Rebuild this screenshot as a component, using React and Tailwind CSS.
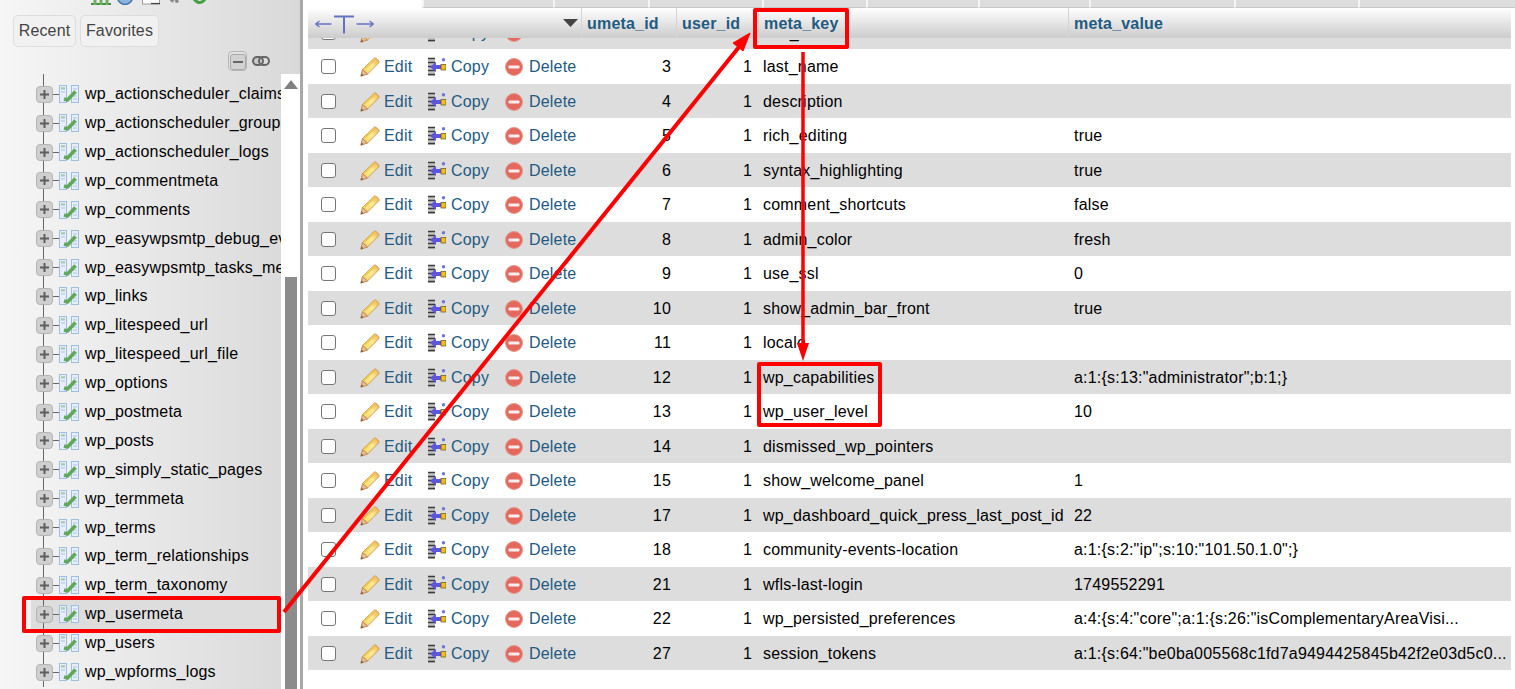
import { useId } from "react"

const tables = [
  "wp_actionscheduler_claims",
  "wp_actionscheduler_groups",
  "wp_actionscheduler_logs",
  "wp_commentmeta",
  "wp_comments",
  "wp_easywpsmtp_debug_events",
  "wp_easywpsmtp_tasks_meta",
  "wp_links",
  "wp_litespeed_url",
  "wp_litespeed_url_file",
  "wp_options",
  "wp_postmeta",
  "wp_posts",
  "wp_simply_static_pages",
  "wp_termmeta",
  "wp_terms",
  "wp_term_relationships",
  "wp_term_taxonomy",
  "wp_usermeta",
  "wp_users",
  "wp_wpforms_logs",
]

const rows = [
  [3, "last_name", ""],
  [4, "description", ""],
  [5, "rich_editing", "true"],
  [6, "syntax_highlighting", "true"],
  [7, "comment_shortcuts", "false"],
  [8, "admin_color", "fresh"],
  [9, "use_ssl", "0"],
  [10, "show_admin_bar_front", "true"],
  [11, "locale", ""],
  [12, "wp_capabilities", 'a:1:{s:13:"administrator";b:1;}'],
  [13, "wp_user_level", "10"],
  [14, "dismissed_wp_pointers", ""],
  [15, "show_welcome_panel", "1"],
  [17, "wp_dashboard_quick_press_last_post_id", "22"],
  [18, "community-events-location", 'a:1:{s:2:"ip";s:10:"101.50.1.0";}'],
  [21, "wfls-last-login", "1749552291"],
  [22, "wp_persisted_preferences", 'a:4:{s:4:"core";a:1:{s:26:"isComplementaryAreaVisi...'],
  [27, "session_tokens", 'a:1:{s:64:"be0ba005568c1fd7a9494425845b42f2e03d5c0...'],
]

const topCells = [131, 95, 114, 104, 112, 111, 145, 124, 157]

// =========================
// ICONS
// =========================
const PencilIcon = () => {
  const id = useId()
  return (
    <svg width="20" height="20" viewBox="0 0 20 20" className="shrink-0">
      <defs>
        <linearGradient id={id} x1="0" y1="1" x2="1" y2="0">
          <stop offset="0" stopColor="#f7d95c" />
          <stop offset="0.55" stopColor="#fbeb9a" />
          <stop offset="1" stopColor="#e9a94a" />
        </linearGradient>
      </defs>
      <path d="M14.5 1 C16 0.5 19.5 4 19 5.5 L7.5 17 L2.5 12.5 Z" fill={`url(#${id})`} stroke="#d49a4c" strokeWidth="1" strokeLinejoin="round" />
      <path d="M2.5 12.5 L7.5 17 L0.8 19.2 Z" fill="#e8bd93" stroke="#c08a58" strokeWidth="1" strokeLinejoin="round" />
      <path d="M0.8 19.2 L1.6 16.6 L3.5 18.2 Z" fill="#7a5a3c" />
      <path d="M4.5 12 L14.5 3" stroke="#f0c840" strokeWidth="1.4" />
    </svg>
  )
}

const CopyIcon = () => (
  <svg width="18" height="20" viewBox="0 0 18 20" className="shrink-0">
    <rect x="0" y="1" width="7" height="18" fill="#c4c4c4" />
    <path d="M0 1.5h7M0 5.5h7M0 9.5h7M0 13.5h7M0 17.5h7" stroke="#3a3a3a" strokeWidth="1.3" />
    <path d="M2 10 L8 5 L8 8 L13 8 L13 12 L8 12 L8 15 Z" fill="#5d55dc" />
    <rect x="13" y="7.5" width="5" height="5.5" fill="#f4bd1c" stroke="#5c5220" strokeWidth="0.7" />
    <circle cx="15.5" cy="2.8" r="1.7" fill="#6f74d6" />
  </svg>
)

const DeleteIcon = () => (
  <svg width="18" height="18" viewBox="0 0 18 18" className="shrink-0">
    <circle cx="9" cy="9" r="8.5" fill="#e4685d" stroke="#e29a90" strokeWidth="1" />
    <rect x="3.5" y="7.4" width="11" height="3.2" rx="1" fill="#fbeeee" />
  </svg>
)

const PlusBox = () => (
  <span className="z-10 flex h-[17px] w-[17px] shrink-0 items-center justify-center rounded-[4px] border border-[#b5b5b5] bg-[#cfcfcf]">
    <svg width="11" height="11" viewBox="0 0 11 11">
      <path d="M5.5 1v9M1 5.5h9" stroke="#5f5f5f" strokeWidth="2" />
    </svg>
  </span>
)

const TableIcon = () => (
  <svg width="20" height="18" viewBox="0 0 20 18" className="shrink-0">
    <rect x="0.5" y="0.5" width="7" height="17" fill="#e6eff9" stroke="#9dbde3" />
    <rect x="12.5" y="0.5" width="7" height="17" fill="#e6eff9" stroke="#9dbde3" />
    <path d="M2 4h4M2 7h4M14 4h4M14 8h4M14 11h4M14 14h4" stroke="#a6c3e4" strokeWidth="1" />
    <path d="M2 3h4" stroke="#7fc076" strokeWidth="1" />
    <path d="M5 14 L8.5 15 L16.5 6.5" fill="none" stroke="#62a85a" strokeWidth="3.6" strokeLinejoin="round" />
  </svg>
)

const TopIcons = () => (
  <div className="flex h-[5px] items-end overflow-hidden pl-[91px]">
    <svg width="20" height="12" viewBox="0 0 20 12" className="-mb-[1px] shrink-0">
      <path d="M0 10.5h20" stroke="#3f8f3c" strokeWidth="3" />
      <path d="M4 0v11M10 0v11M16 0v11" stroke="#6fae62" strokeWidth="3" />
    </svg>
    <svg width="16" height="12" viewBox="0 0 16 12" className="ml-[6px] shrink-0">
      <circle cx="8" cy="4" r="7.5" fill="#8db3dd" stroke="#3f74b3" strokeWidth="1.5" />
    </svg>
    <svg width="18" height="12" viewBox="0 0 18 12" className="ml-[9px] shrink-0">
      <rect x="0.5" y="-6" width="17" height="17" fill="#ffffff" stroke="#999" />
      <path d="M9 10.5h9" stroke="#444" strokeWidth="1.2" />
    </svg>
    <svg width="16" height="12" viewBox="0 0 16 12" className="ml-[7px] shrink-0">
      <circle cx="8" cy="3" r="5.5" fill="#c4c4c4" stroke="#888" strokeWidth="3" strokeDasharray="3 2" />
    </svg>
    <svg width="13" height="12" viewBox="0 0 13 12" className="ml-[10px] shrink-0">
      <path d="M1 6 Q7 13 12 6" fill="none" stroke="#46a046" strokeWidth="3" />
    </svg>
  </div>
)

const HeaderArrows = () => (
  <svg width="60" height="22" viewBox="0 0 60 22" className="shrink-0">
    <g stroke="#6472c4" fill="none" strokeWidth="1.4">
      <path d="M0.5 12h16M0.5 12l4-3M0.5 12l4 3" />
      <path d="M41.5 12h17M58.5 12l-4-3M58.5 12l-4 3" />
      <path d="M19 4.5h20M29 4v17.5" strokeWidth="2" />
    </g>
  </svg>
)

// =========================
// SIDEBAR
// =========================
const TreeRow = ({ name }) => {
  const active = name === "wp_usermeta"
  return (
    <div className={`relative flex h-[28.9px] items-center whitespace-nowrap ${active ? "ml-[31px] bg-[#dddddd] pl-[5px]" : "pl-[36px]"}`}>
      <span className={`absolute top-0 bottom-0 w-px bg-[#666666] ${active ? "left-[12px]" : "left-[43px]"}`} />
      <PlusBox />
      <span className="h-px w-[6px] shrink-0 bg-[#666666]" />
      <TableIcon />
      <span className="ml-[6px] text-base tracking-[0.18px] text-black">{name}</span>
    </div>
  )
}

const Sidebar = () => (
  <aside className="flex h-full w-[303px] shrink-0 flex-col border-r-[3px] border-[#a8a8a8] bg-gradient-to-r from-[#f6f6f6] to-[#d9d9d9]">
    <TopIcons />
    <div className="mt-[10px] flex gap-[4px] pl-[13px]">
      <button className="h-[32px] w-[63px] rounded-[5px] border border-[#dddddd] bg-[#f1f1f1] text-base tracking-[0.15px] text-[#444444]">Recent</button>
      <button className="h-[32px] w-[79px] rounded-[5px] border border-[#dddddd] bg-[#f1f1f1] text-base tracking-[0.15px] text-[#444444]">Favorites</button>
    </div>
    <div className="flex h-[27px] items-center gap-[5px] pl-[228px]">
      <span className="flex h-[20px] w-[19px] items-end justify-end rounded-[4px] border border-[#b5b5b5] bg-[#e2e2e2]">
        <span className="flex h-[16px] w-[16px] items-center justify-center rounded-[3px] border border-[#aaaaaa] bg-[#d2d2d2]">
          <span className="h-[2px] w-[10px] bg-[#666666]" />
        </span>
      </span>
      <svg width="18" height="10" viewBox="0 0 18 10" className="shrink-0">
        <rect x="1" y="1" width="10" height="8" rx="4" fill="#c8c8c8" stroke="#666" strokeWidth="2" />
        <rect x="7" y="1" width="10" height="8" rx="4" fill="none" stroke="#666" strokeWidth="2" />
      </svg>
    </div>
    <div className="flex min-h-0 flex-1">
      <div className="w-[281px] shrink-0 overflow-hidden">
        <div className="h-[5.8px] pl-[43px]">
          <div className="h-full w-px bg-[#666666]" />
        </div>
        {tables.map((name) => (
          <TreeRow key={name} name={name} />
        ))}
      </div>
      <div className="flex w-[19px] shrink-0 flex-col items-center bg-white">
        <svg width="14" height="9" viewBox="0 0 14 9" className="mt-[6px] shrink-0">
          <path d="M7 0 L14 9 L0 9 Z" fill="#808080" />
        </svg>
        <div className="mt-[188px] w-[12px] flex-1 bg-[#8c8c8c]" />
      </div>
    </div>
  </aside>
)

// =========================
// TABLE
// =========================
const Actions = () => (
  <>
    <div className="flex w-[40px] shrink-0 justify-center">
      <span className="-mt-[1px] h-[15px] w-[15px] rounded-[3px] border border-[#767676] bg-white" />
    </div>
    <a className="flex w-[80px] shrink-0 items-center gap-[4px] pl-[12px] text-[#235a81]">
      <PencilIcon />
      Edit
    </a>
    <a className="flex w-[77px] shrink-0 items-center gap-[5px] text-[#235a81]">
      <CopyIcon />
      Copy
    </a>
    <a className="flex w-[76px] shrink-0 items-center gap-[6px] text-[#235a81]">
      <DeleteIcon />
      Delete
    </a>
  </>
)

const Row = ({ id, metaKey, value, shaded }) => (
  <div className={`flex h-[34.5px] items-center whitespace-nowrap pt-[2px] text-base tracking-[0.2px] text-black ${shaded ? "bg-[#dddddd]" : "bg-white"}`}>
    <Actions />
    <div className="w-[95px] shrink-0 pr-[5px] text-right">{id}</div>
    <div className="w-[81px] shrink-0 pr-[5px] text-right">1</div>
    <div className="w-[311px] shrink-0 pl-[6px]">{metaKey}</div>
    <div className="min-w-0 flex-1 pl-[6px]">{value}</div>
  </div>
)

const HeaderCell = ({ className, children }) => (
  <div className={`flex h-full shrink-0 items-center border-l border-[#d4d4d4] pt-[2px] text-base font-bold tracking-[0.2px] text-[#235a81] ${className}`}>
    {children}
  </div>
)

const DataTable = () => (
  <main className="min-w-0 flex-1">
    <div className="ml-[119px] flex h-[8px]">
      {topCells.map((w, i) => (
        <div key={i} className="h-full shrink-0 border-b border-b-[#c8c8c8] border-l-2 border-l-[#f4f4f4] bg-[#dddddd]" style={{ width: w }} />
      ))}
    </div>
    <div className="ml-[5px] mr-[4px]">
      <div className="flex h-[30px] items-center bg-gradient-to-b from-white to-[#cccccc]">
        <div className="flex h-full w-[273px] shrink-0 items-center justify-between pl-[7px] pr-[3px]">
          <HeaderArrows />
          <svg width="15" height="8" viewBox="0 0 15 8" className="shrink-0">
            <path d="M0 0 H15 L7.5 8 Z" fill="#444444" />
          </svg>
        </div>
        <HeaderCell className="w-[95px] pl-[5px]">umeta_id</HeaderCell>
        <HeaderCell className="w-[82px] pl-[5px]">user_id</HeaderCell>
        <HeaderCell className="w-[310px] pl-[5px]">meta_key</HeaderCell>
        <HeaderCell className="flex-1 pl-[5px]">meta_value</HeaderCell>
      </div>
      <div className="flex h-[11px] flex-col justify-end overflow-hidden">
        <div className="shrink-0">
          <Row id={2} metaKey="first_name" value="" shaded />
        </div>
      </div>
      {rows.map(([id, metaKey, value], i) => (
        <Row key={id} id={id} metaKey={metaKey} value={value} shaded={i % 2 === 1} />
      ))}
    </div>
  </main>
)

export default function App() {
  return (
    <div className="relative flex h-[689px] w-[1515px] overflow-hidden bg-white font-['Liberation_Sans',Arial,sans-serif]">
      <Sidebar />
      <DataTable />

      {/* annotations drawn on top of the screenshot */}
      <div className="absolute left-[22px] top-[596px] h-[37px] w-[259px] rounded-[2px] border-[4px] border-[#ff0000]" />
      <div className="absolute left-[753px] top-[8px] h-[41px] w-[96px] rounded-[2px] border-[4px] border-[#ff0000]" />
      <div className="absolute left-[757px] top-[362px] h-[65px] w-[125px] rounded-[2px] border-[4px] border-[#ff0000]" />
      <svg width="1515" height="689" viewBox="0 0 1515 689" className="pointer-events-none absolute left-0 top-0">
        <path d="M284 612 L739 47" stroke="#ff0000" strokeWidth="4" fill="none" />
        <path d="M750 33 L733 43 L743 51 Z" fill="#ff0000" stroke="#ff0000" strokeWidth="1" />
        <path d="M803 52 L803 345" stroke="#ff0000" strokeWidth="3.5" fill="none" />
        <path d="M797 343 L809 343 L803 361 Z" fill="#ff0000" />
      </svg>
    </div>
  )
}
